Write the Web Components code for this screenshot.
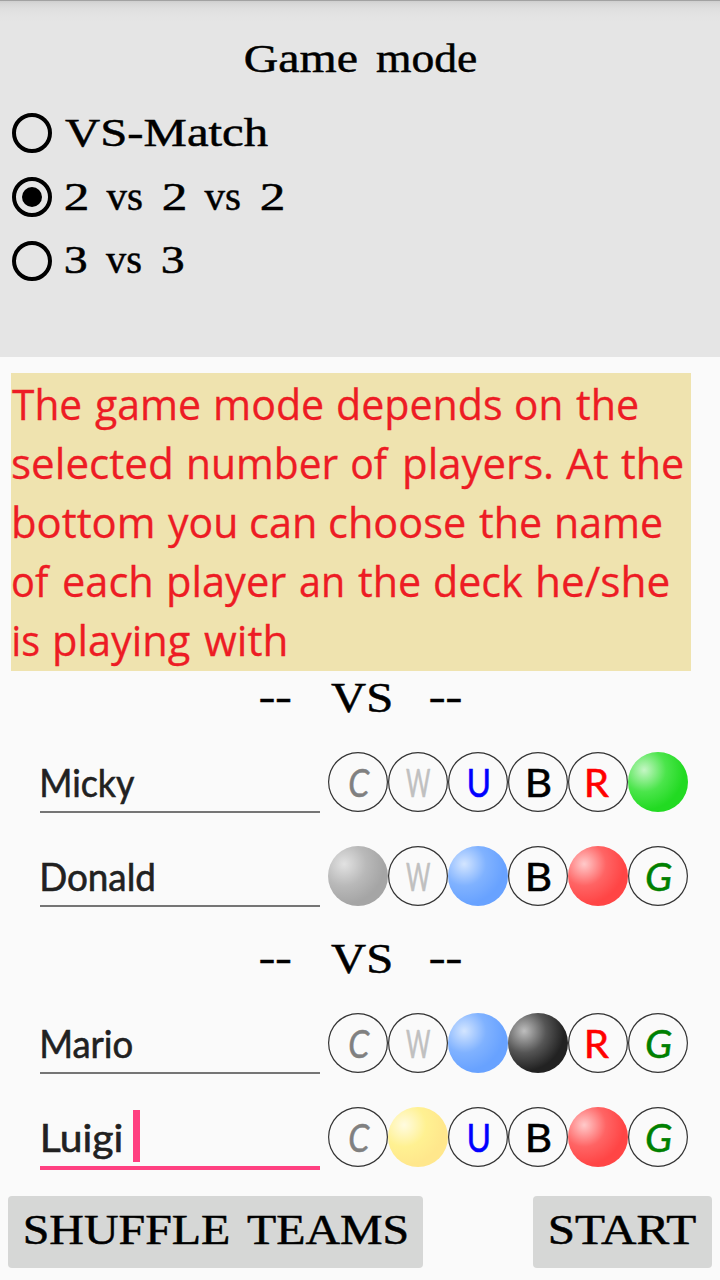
<!DOCTYPE html>
<html lang="en">
<head>
<meta charset="utf-8">
<title>Game mode</title>
<style>
html,body{margin:0;background:#fafafa}
</style>
</head>
<body>
<game-setup></game-setup>
<script>
const DISPLAY = '"Liberation Serif", serif';
const HAND = 'Lato, sans-serif';
const PLAIN = '"Open Sans", sans-serif';
const FACES = {
  display: {family: DISPLAY, size: 41, stroke: .5, inset: .5, drop: .8},
  hand: {family: HAND, size: 38.5, stroke: .6, inset: .5, drop: .7},
  mana: {family: HAND, size: 38.5, stroke: .5, inset: .5, drop: 0},
  plain: {family: PLAIN, size: 42, stroke: .3, inset: .2, drop: .8}
};
const ctx = document.createElement('canvas').getContext('2d');

// One line of words; every word's ink fills its own span (start-end, px).
class WordLine extends HTMLElement {
  connectedCallback() {
    const root = this.attachShadow({mode: 'open'});
    const f = FACES[this.getAttribute('face') || 'display'];
    const size = +(this.getAttribute('size') || f.size);
    const style = this.getAttribute('slant') || 'normal';
    const h = +this.getAttribute('h'), base = +this.getAttribute('base') + f.drop;
    const words = this.getAttribute('text').split(' ');
    const spans = this.getAttribute('spans').split(' ').map(s => s.split('-').map(Number));
    ctx.font = `${style} ${size}px ${f.family}`;
    let at = 0, html = '';
    words.forEach((w, i) => {
      const a = spans[i][0] + f.inset, b = spans[i][1] - f.inset;
      const m = ctx.measureText(w);
      const sx = (b - a) / (m.actualBoundingBoxRight + m.actualBoundingBoxLeft);
      const A = m.fontBoundingBoxAscent, D = m.fontBoundingBoxDescent;
      const dy = base - ((h - A - D) / 2 + A);
      html += `<span class="w" style="margin-left:${a - at}px;width:${b - a}px"><span class="t" style="transform:translate(${m.actualBoundingBoxLeft * sx}px,${dy}px) scaleX(${sx})">${w}</span></span>`;
      at = b;
    });
    root.innerHTML = `<style>
      :host{display:flex;height:${h}px;font:${style} ${size}px/${h}px ${f.family};-webkit-text-stroke:${f.stroke}px currentColor;white-space:nowrap}
      .w{display:block;flex:none;height:${h}px}
      .t{display:inline-block;transform-origin:0 0}
    </style>${html}`;
  }
}
customElements.define('word-line', WordLine);

class ModeOption extends HTMLElement {
  connectedCallback() {
    const on = this.hasAttribute('checked');
    this.attachShadow({mode: 'open'}).innerHTML = `<style>
      :host{display:flex;height:64px;align-items:center}
      svg{display:block;flex:none;margin-left:12px;width:40px;height:40px}
      .label{margin-left:12px}
    </style>
    <svg viewBox="0 0 40 40"><circle cx="20" cy="20" r="18" fill="none" stroke="#000" stroke-width="4"/>${on ? '<circle cx="20" cy="20" r="10" />' : ''}</svg>
    <div class="label"><slot></slot></div>`;
  }
}
customElements.define('mode-option', ModeOption);

const MANA = {
  C: {ink: '#808080', span: '20-42', slant: 'italic', ball: ['#e2e2e2', '#b9b9b9', '#a5a5a5']},
  W: {ink: '#c0c0c0', span: '17.5-43', slant: 'normal', ball: ['#fffbe0', '#fff192', '#ffe78c']},
  U: {ink: '#0000ff', span: '20-41', slant: 'normal', ball: ['#d3e5ff', '#80b2ff', '#68a2ff']},
  B: {ink: '#000000', span: '19-42', slant: 'normal', ball: ['#bebebe', '#555555', '#222222']},
  R: {ink: '#ff0000', span: '18.5-41.5', slant: 'normal', ball: ['#ffcaca', '#ff6464', '#ff4545']},
  G: {ink: '#008000', span: '17-44', slant: 'italic', ball: ['#c5f6c5', '#4be54b', '#22da22']}
};
class ManaButton extends HTMLElement {
  connectedCallback() {
    const k = this.getAttribute('mana'), m = MANA[k], on = this.hasAttribute('on');
    this.attachShadow({mode: 'open'}).innerHTML = `<style>
      :host{display:block;box-sizing:border-box;width:60px;height:60px;border-radius:50%;color:${m.ink}}
      :host(:not([on])){box-shadow:inset 0 0 0 1.2px #333}
      :host([on]){background:radial-gradient(circle at 27% 30%,${m.ball[0]} 0,${m.ball[1]} 36%,${m.ball[2]} 66%)}
    </style>${on ? '' : `<word-line face="mana" h="60" base="44.5" slant="${m.slant}" text="${k}" spans="${m.span}"></word-line>`}`;
  }
}
customElements.define('mana-button', ManaButton);

class PlayerRow extends HTMLElement {
  connectedCallback() {
    const deck = this.getAttribute('deck') || '';
    this.attachShadow({mode: 'open'}).innerHTML = `<style>
      :host{display:flex;height:94px;padding-left:40px;box-sizing:border-box}
      .field{position:relative;box-sizing:border-box;width:280px;height:78px;border-bottom:2px solid #757575;color:#212121}
      :host([focused]) .field{height:80px;border-bottom:4px solid #ff4081}
      .caret{display:none;position:absolute;left:93px;top:20px;width:7px;height:52px;background:#ff4081}
      :host([focused]) .caret{display:block}
      .deck{display:flex;margin:17px 0 0 8px}
    </style>
    <div class="field"><word-line face="hand" h="76" base="61" text="${this.getAttribute('name')}" spans="${this.getAttribute('span')}"></word-line><div class="caret"></div></div>
    <div class="deck">${[...'CWUBRG'].map(k => `<mana-button mana="${k}"${deck.includes(k) ? ' on' : ''}></mana-button>`).join('')}</div>`;
  }
}
customElements.define('player-row', PlayerRow);

class VersusDivider extends HTMLElement {
  connectedCallback() {
    this.attachShadow({mode: 'open'}).innerHTML = `<style>
      :host{display:grid;grid-template-columns:320px 90px 1fr;height:64px}
    </style>
    <word-line slant="italic" h="64" base="38.5" text="--" spans="259-291"></word-line>
    <word-line size="42" h="64" base="40" text="VS" spans="10.5-71"></word-line>
    <word-line slant="italic" h="64" base="38.5" text="--" spans="19.5-52"></word-line>`;
  }
}
customElements.define('versus-divider', VersusDivider);

class ActionButton extends HTMLElement {
  connectedCallback() {
    this.attachShadow({mode: 'open'}).innerHTML = `<style>
      :host{display:block;height:72px;border-radius:4px;background:#d6d7d6;color:#000}
    </style><slot></slot>`;
  }
}
customElements.define('action-button', ActionButton);

class HelpNote extends HTMLElement {
  connectedCallback() {
    this.attachShadow({mode: 'open'}).innerHTML = `<style>
      :host{display:block;width:680px;height:298px;margin:16px 0 0 11px;background:#efe3af;color:#ed1c24}
    </style><slot></slot>`;
  }
}
customElements.define('help-note', HelpNote);

class GameSetup extends HTMLElement {
  connectedCallback() {
    this.attachShadow({mode: 'open'}).innerHTML = `<style>
      :host{display:block;width:720px;height:1280px;overflow:hidden;background:#fafafa;color:#000}
      header{height:357px;background:linear-gradient(#a2a2a2 0,#a2a2a2 1px,#cfcfcf 1px,#d8d8d8 4px,#dfdfdf 9px,#e3e3e3 15px,#e5e5e5 22px)}
      .title{padding:25px 0 12px}
      .second{margin-top:9px}
      footer{display:flex;justify-content:space-between;padding:12px 8px 0}
      .shuffle{width:415px}.start{width:179px}
    </style>
    <header>
      <div class="title"><word-line h="64" base="46" text="Game mode" spans="244-356.5 375.5-476.5"></word-line></div>
      <mode-option><word-line h="64" base="44" text="VS-Match" spans="0.5-204"></word-line></mode-option>
      <mode-option checked><word-line h="64" base="44" text="2 vs 2 vs 2" spans="0-23.5 42-78.5 98-121.5 140-176.5 196-219.5"></word-line></mode-option>
      <mode-option><word-line h="64" base="43.5" text="3 vs 3" spans="0-22 41.5-77.5 97-119"></word-line></mode-option>
    </header>
    <help-note>
      <word-line face="plain" h="59" base="46" text="The game mode depends on the" spans="1-70 84-189 205-312 327-491 505-550 565-627"></word-line>
      <word-line face="plain" h="59" base="46" text="selected number of players. At the" spans="1.5-160 177.5-327 341-379 393.5-540 555-597 610-672"></word-line>
      <word-line face="plain" h="59" base="46" text="bottom you can choose the name" spans="3-142 157-225 240-304 319-454 468-530 546-651"></word-line>
      <word-line face="plain" h="59" base="46" text="of each player an the deck he/she" spans="1.5-40 53-140.5 157.5-275 289-332 347-409 424-512 527-658"></word-line>
      <word-line face="plain" h="59" base="46" text="is playing with" spans="3-28.5 44-179 193-275"></word-line>
    </help-note>
    <versus-divider></versus-divider>
    <player-row name="Micky" span="1.5-95" deck="G"></player-row>
    <player-row name="Donald" span="1.5-114" deck="CUR"></player-row>
    <versus-divider class="second"></versus-divider>
    <player-row name="Mario" span="1.5-93" deck="UB"></player-row>
    <player-row name="Luigi" span="2-82" deck="WR" focused></player-row>
    <footer>
      <action-button class="shuffle"><word-line h="72" base="47.5" size="42" text="SHUFFLE TEAMS" spans="16-220.5 238-398.5"></word-line></action-button>
      <action-button class="start"><word-line h="72" base="47.5" size="42" text="START" spans="16.5-163"></word-line></action-button>
    </footer>`;
  }
}
customElements.define('game-setup', GameSetup);
</script>
</body>
</html>
